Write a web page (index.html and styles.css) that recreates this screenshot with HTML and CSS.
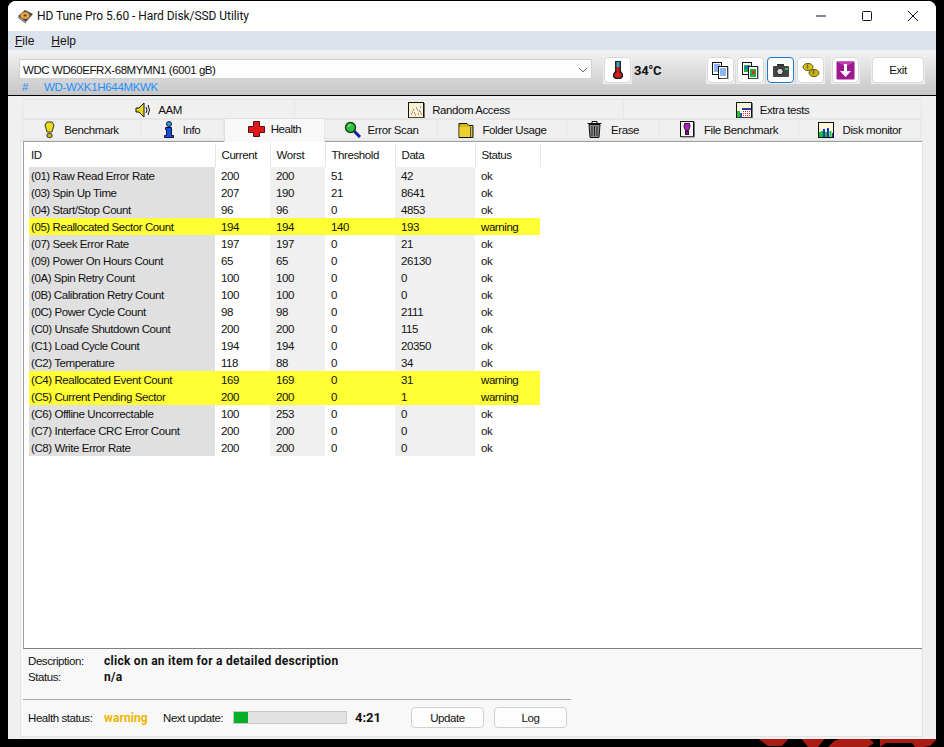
FILE: index.html
```html
<!DOCTYPE html>
<html lang="en">
<head>
<meta charset="utf-8">
<title>HD Tune Pro 5.60 - Hard Disk/SSD Utility</title>
<link rel="stylesheet" href="styles.css">
</head>
<body>
<svg class="wallpaper" width="184" height="10" viewBox="0 0 184 10"><path fill="#a81c14" d="M0 0h34l-8 9H12zM44 0h26l-8 10H52zM72 10l6-6 10-4h24l6 6-6 4zM124 0h30l6-3h20v6l-6 6-14 2-4-5h-26l-6 4z"/></svg>
<div class="window">
  <header class="titlebar">
    <svg class="app-icon" width="17" height="17" viewBox="0 0 17 17"><path fill="#4a4a4a" d="M1 8l7-6 8 4-7 8z"/><path fill="#8a8a8a" d="M1 8l8 6v2L1 10z"/><ellipse cx="8" cy="7.5" rx="4.6" ry="3.6" fill="#e8a040"/><ellipse cx="8" cy="7.5" rx="1.4" ry="1" fill="#5a4020"/></svg>
    <span class="title-text">HD Tune Pro 5.60 - Hard Disk/SSD Utility</span>
    <div class="win-controls">
      <svg class="win-btn" width="46" height="20" viewBox="0 0 46 20"><path d="M18 10h10" stroke="#111" fill="none"/></svg>
      <svg class="win-btn" width="46" height="20" viewBox="0 0 46 20"><rect x="18.5" y="5.5" width="9" height="9" rx="1" stroke="#111" fill="none"/></svg>
      <svg class="win-btn" width="46" height="20" viewBox="0 0 46 20"><path d="M18 5l10 10M28 5L18 15" stroke="#111" fill="none"/></svg>
    </div>
  </header>
  <nav class="menubar">
    <span class="menu-item"><u>F</u>ile</span>
    <span class="menu-item"><u>H</u>elp</span>
  </nav>
  <section class="toolbar">
    <div class="drive-col">
      <div class="combo">
        <span>WDC WD60EFRX-68MYMN1 (6001 gB)</span>
        <svg width="10" height="6" viewBox="0 0 10 6"><path d="M1 1l4 4 4-4" stroke="#666" fill="none"/></svg>
      </div>
      <div class="serial"><span class="serial-hash">#</span><span>WD-WXK1H644MKWK</span></div>
    </div>
    <button class="tool-btn thermo-btn">
      <svg width="12" height="20" viewBox="0 0 12 20"><path fill="#222" d="M3 1h6v10l2 3v3l-2 2H3l-2-2v-3l2-3z"/><rect x="4.5" y="2" width="3" height="5" fill="#3aa8c8"/><rect x="4.5" y="7" width="3" height="6" fill="#d01818"/><path fill="#e01818" d="M2.5 14l2-1h3l2 1v2l-1.5 1.500h-4L2.500 16z"/></svg>
    </button>
    <span class="temp">34°C</span>
    <div class="tool-group">
      <button class="tool-btn">
        <svg width="17" height="17" viewBox="0 0 17 17"><rect x=".5" y=".5" width="9" height="12" fill="#fff" stroke="#111"/><path d="M2 3h6M2 5h6M2 7h6M2 9h6" stroke="#1a6ee0"/><rect x="6.500" y="4.500" width="9" height="12" fill="#fff" stroke="#111"/><path d="M8 7h6M8 9h6M8 11h6M8 13h6" stroke="#1a6ee0"/><path d="M16 5v12H8" stroke="#777" fill="none"/></svg>
      </button>
      <button class="tool-btn">
        <svg width="17" height="17" viewBox="0 0 17 17"><rect x=".5" y=".5" width="9" height="12" fill="#fff" stroke="#111"/><rect x="2" y="3" width="6" height="7" fill="#20b040"/><rect x="3" y="4" width="3" height="3" fill="#1a6ee0"/><rect x="6.500" y="4.500" width="9" height="12" fill="#fff" stroke="#111"/><rect x="8" y="7" width="6" height="8" fill="#20b040"/><rect x="10" y="9" width="3" height="3" fill="#e03020"/><path d="M16 5v12H8" stroke="#777" fill="none"/></svg>
      </button>
      <button class="tool-btn tool-btn-active">
        <svg width="18" height="15" viewBox="0 0 18 15"><rect x="5" y="1" width="7" height="3" fill="#333"/><rect x="1" y="3" width="16" height="11" rx="1" fill="#444"/><circle cx="8" cy="8.500" r="3.200" fill="#ddd" stroke="#222"/><rect x="13" y="5" width="3" height="2" fill="#30c050"/></svg>
      </button>
      <button class="tool-btn">
        <svg width="18" height="16" viewBox="0 0 18 16"><ellipse cx="6" cy="5" rx="5" ry="3.600" fill="#d8c010" stroke="#6a5a10"/><ellipse cx="12" cy="11" rx="5" ry="3.600" fill="#c8b010" stroke="#6a5a10"/><path d="M5.500 2.500v4M11.500 8v4" stroke="#6a6a40" stroke-width="1.500"/></svg>
      </button>
      <button class="tool-btn tool-btn-far">
        <svg width="19" height="19" viewBox="0 0 19 19"><rect x=".5" y=".5" width="18" height="18" rx="1" fill="#a01890"/><path d="M.5.500h18L9.500 6z" fill="#c040b0"/><path d="M8 3h3v7h4l-5.500 6L4 10h4z" fill="#fff"/></svg>
      </button>
    </div>
    <button class="tool-btn exit-btn">Exit</button>
  </section>
  <section class="tabs">
    <div class="tab-row">
      <div class="tab t-aam">
        <svg width="17" height="16" viewBox="0 0 17 16"><path d="M1 6h3l5-5v14l-5-5H1z" fill="#e8d820" stroke="#111"/><path d="M11 5q2 3 0 6M13 3q3 5 0 10" stroke="#111" fill="none"/></svg>
        <span>AAM</span>
      </div>
      <div class="tab t-random">
        <svg class="gap-slim" width="17" height="16" viewBox="0 0 17 16"><rect x=".5" y=".5" width="15" height="15" fill="#fbf3cc" stroke="#111"/><path d="M16.500 1v15H1" stroke="#777" fill="none"/><path d="M3 12h1M6 11h1M9 8h1M12 5h1M5 8h1M8 6h1M11 9h1" stroke="#2030d0" stroke-width="1.200"/><path d="M4 10h1M7 13h1M10 12h1M13 12h1M12 10h1" stroke="#e02020" stroke-width="1.200"/></svg>
        <span>Random Access</span>
      </div>
      <div class="tab t-extra">
        <svg class="gap-slim" width="17" height="16" viewBox="0 0 17 16"><rect x=".5" y=".5" width="15" height="15" fill="#fdf8d8" stroke="#111"/><path d="M16.500 1v15H1" stroke="#777" fill="none"/><rect x="1" y="9" width="3" height="6" fill="#20c030"/><rect x="4" y="11" width="2" height="4" fill="#1a50d0"/><rect x="6" y="6" width="9" height="9" fill="#fff"/><rect x="6" y="6" width="9" height="2" fill="#2040b0"/><path d="M7 9.500h7M7 11.500h7M7 13.500h7" stroke="#e02020" stroke-dasharray="1 1"/></svg>
        <span>Extra tests</span>
      </div>
    </div>
    <div class="tab-row">
      <div class="tab t-bench">
        <svg class="gap-wide" width="11" height="17" viewBox="0 0 11 17"><path d="M3 1h5l2 3-2 7H3L1 4z" fill="#ecdc20" stroke="#333"/><rect x="3" y="12.500" width="5" height="4" rx="1.500" fill="#c8b810" stroke="#333"/></svg>
        <span>Benchmark</span>
      </div>
      <div class="tab t-info">
        <svg class="gap-wide" width="10" height="17" viewBox="0 0 10 17"><circle cx="5" cy="3" r="2.500" fill="#20a0f0" stroke="#113"/><path d="M1.500 6.500h6v8h2v2h-9v-2h2v-6h-1z" fill="#1050e0" stroke="#113"/></svg>
        <span>Info</span>
      </div>
      <div class="tab tab-selected t-health">
        <svg width="17" height="16" viewBox="0 0 17 16"><path d="M5.500.500h6v5h5v6h-5v4h-6v-4h-5v-6h5z" fill="#e01818" stroke="#501010"/></svg>
        <span>Health</span>
      </div>
      <div class="tab t-scan">
        <svg width="18" height="17" viewBox="0 0 18 17"><path d="M9 9l7 7" stroke="#1020a0" stroke-width="3"/><circle cx="6.500" cy="6.500" r="5" fill="#30c040" stroke="#184018" stroke-width="1.400"/><path d="M4 6q1-2 3-2.500" stroke="#c0f0c0" fill="none"/></svg>
        <span>Error Scan</span>
      </div>
      <div class="tab t-folder">
        <svg class="gap-wide" width="16" height="16" viewBox="0 0 16 16"><path d="M1 1.500h8l2 2h4v12H1z" fill="#d8b818" stroke="#111"/><path d="M1.500 5h12v10h-12z" fill="#ecd030"/><path d="M12.500 5v10" stroke="#3a5080"/></svg>
        <span>Folder Usage</span>
      </div>
      <div class="tab t-erase">
        <svg class="gap-wide" width="15" height="17" viewBox="0 0 15 17"><path d="M.5 2.500h14M5 2V.5h5V2" stroke="#111" fill="none"/><path d="M2 3.500h11l-1 13H3z" fill="#8a8a8a" stroke="#111"/><path d="M5 5v10M7.500 5v10M10 5v10" stroke="#222"/></svg>
        <span>Erase</span>
      </div>
      <div class="tab t-file">
        <svg class="gap-wide" width="15" height="17" viewBox="0 0 15 17"><rect x=".5" y=".5" width="13" height="15" fill="#f4f4f0" stroke="#111"/><path d="M14.500 1v15H1" stroke="#777" fill="none"/><path d="M4.500 2.500h5l.5 3-1.500 4h-3L4 5.500z" fill="#b020c0" stroke="#301030"/><rect x="5.500" y="10.500" width="3" height="3" fill="#901090" stroke="#301030"/></svg>
        <span>File Benchmark</span>
      </div>
      <div class="tab t-monitor">
        <svg class="gap-wide" width="16" height="16" viewBox="0 0 16 16"><rect x=".5" y=".5" width="15" height="15" fill="#fdf8d8" stroke="#111"/><path d="M2 15V10M4 15V9" stroke="#18c030" stroke-width="2"/><path d="M6 15V7" stroke="#1838d0" stroke-width="2"/><path d="M8 15V10" stroke="#18c030" stroke-width="2"/><path d="M10 15V6" stroke="#1838d0" stroke-width="2"/><path d="M12.500 15V9" stroke="#18c030" stroke-width="2"/><path d="M14.500 15V11" stroke="#1838d0" stroke-width="1"/></svg>
        <span>Disk monitor</span>
      </div>
    </div>
  </section>
  <main class="page">
    <div class="panel">
      <table class="smart">
        <thead>
          <tr><th class="c-id">ID</th><th class="c-cur">Current</th><th class="c-worst">Worst</th><th class="c-thr">Threshold</th><th class="c-data">Data</th><th class="c-status">Status</th></tr>
        </thead>
        <tbody>
          <tr><td>(01) Raw Read Error Rate</td><td>200</td><td>200</td><td>51</td><td>42</td><td>ok</td></tr>
          <tr><td>(03) Spin Up Time</td><td>207</td><td>190</td><td>21</td><td>8641</td><td>ok</td></tr>
          <tr><td>(04) Start/Stop Count</td><td>96</td><td>96</td><td>0</td><td>4853</td><td>ok</td></tr>
          <tr class="warn"><td>(05) Reallocated Sector Count</td><td>194</td><td>194</td><td>140</td><td>193</td><td>warning</td></tr>
          <tr><td>(07) Seek Error Rate</td><td>197</td><td>197</td><td>0</td><td>21</td><td>ok</td></tr>
          <tr><td>(09) Power On Hours Count</td><td>65</td><td>65</td><td>0</td><td>26130</td><td>ok</td></tr>
          <tr><td>(0A) Spin Retry Count</td><td>100</td><td>100</td><td>0</td><td>0</td><td>ok</td></tr>
          <tr><td>(0B) Calibration Retry Count</td><td>100</td><td>100</td><td>0</td><td>0</td><td>ok</td></tr>
          <tr><td>(0C) Power Cycle Count</td><td>98</td><td>98</td><td>0</td><td>2111</td><td>ok</td></tr>
          <tr><td>(C0) Unsafe Shutdown Count</td><td>200</td><td>200</td><td>0</td><td>115</td><td>ok</td></tr>
          <tr><td>(C1) Load Cycle Count</td><td>194</td><td>194</td><td>0</td><td>20350</td><td>ok</td></tr>
          <tr><td>(C2) Temperature</td><td>118</td><td>88</td><td>0</td><td>34</td><td>ok</td></tr>
          <tr class="warn"><td>(C4) Reallocated Event Count</td><td>169</td><td>169</td><td>0</td><td>31</td><td>warning</td></tr>
          <tr class="warn"><td>(C5) Current Pending Sector</td><td>200</td><td>200</td><td>0</td><td>1</td><td>warning</td></tr>
          <tr><td>(C6) Offline Uncorrectable</td><td>100</td><td>253</td><td>0</td><td>0</td><td>ok</td></tr>
          <tr><td>(C7) Interface CRC Error Count</td><td>200</td><td>200</td><td>0</td><td>0</td><td>ok</td></tr>
          <tr><td>(C8) Write Error Rate</td><td>200</td><td>200</td><td>0</td><td>0</td><td>ok</td></tr>
        </tbody>
      </table>
    </div>
    <div class="desc-block">
      <div class="desc-row"><span class="desc-label">Description:</span><b class="desc-value">click on an item for a detailed description</b></div>
      <div class="desc-row"><span class="desc-label">Status:</span><b class="desc-value">n/a</b></div>
    </div>
    <div class="status-bar">
      <span class="status-label">Health status:</span>
      <b class="status-value">warning</b>
      <span class="next-label">Next update:</span>
      <div class="progress"><div class="progress-fill" style="width:14px"></div></div>
      <b class="countdown">4:21</b>
      <button class="btn btn-update">Update</button>
      <button class="btn">Log</button>
    </div>
  </main>
</div>
</body>
</html>
```
FILE: styles.css
```css
* { box-sizing: border-box; }
html, body { margin: 0; height: 100%; }
body {
  background: #000;
  font: 11.5px/16px "Liberation Sans", Roboto, sans-serif;
  letter-spacing: -.42px;
  color: #111;
  overflow: hidden;
  position: relative;
}
.wallpaper { position: absolute; right: 4px; bottom: 0; }
button { font: inherit; letter-spacing: inherit; color: inherit; padding: 0; }
svg { display: block; flex: none; }

.window {
  position: relative;
  margin: 1px 0 0 8px;
  width: 928px;
  height: 738px;
  background: #f0f0f0;
  border-radius: 8px 8px 0 0;
  display: flex;
  flex-direction: column;
  overflow: hidden;
}

.titlebar {
  height: 30px;
  flex: none;
  background: #fff;
  display: flex;
  align-items: center;
  padding-left: 9px;
}
.app-icon { margin-right: 3px; }
.title-text { font: 12px/16px Roboto, sans-serif; letter-spacing: -.06px; }
.win-controls { margin-left: auto; display: flex; }
.win-btn { width: 46px; height: 20px; }

.menubar {
  height: 19px;
  flex: none;
  background: #dce3ec;
  display: flex;
  gap: 17px;
  padding-left: 7px;
  align-items: center;
}
.menu-item { font-size: 12px; letter-spacing: 0; }

.toolbar {
  height: 46px;
  flex: none;
  background: linear-gradient(#f2f2f2, #c6c6c6);
  border-bottom: 1px solid #000;
  display: flex;
  align-items: flex-start;
  padding: 7px 0 0 11px;
  isolation: isolate;
}
.drive-col { width: 573px; padding-top: 2px; }
.combo {
  height: 20px;
  background: #fdfdfd;
  border: 1px solid #d0d0d0;
  border-radius: 2px;
  display: flex;
  align-items: center;
  justify-content: space-between;
  padding: 1px 3px 0 3px;
}
.serial {
  display: flex;
  color: #1e90ff;
  padding-left: 3px;
  height: 14px;
  line-height: 16px;
  letter-spacing: -.33px;
}
.serial-hash { width: 22px; }
.tool-btn {
  position: relative;
  width: 27px;
  height: 26px;
  background: #fff;
  border: 1px solid #d8d8d8;
  border-radius: 4px;
  display: flex;
  align-items: center;
  justify-content: center;
}
.tool-btn::before {
  content: "";
  position: absolute;
  inset: -2px;
  background: #eeeeee;
  z-index: -1;
}
.tool-btn-active { border-color: #1a78d0; }
.tool-btn-far { margin-left: 5px; }
.thermo-btn { margin-left: 12px; }
.temp { font: 700 13px/16px Roboto, sans-serif; letter-spacing: -.3px; margin: 6px 0 0 3px; width: 73px; }
.tool-group { display: flex; gap: 3px; }
.exit-btn { width: 52px; margin-left: 13px; }

.tabs { flex: none; padding: 3px 0 0 14px; }
.tab-row { display: flex; height: 20px; }
.tab {
  flex: none;
  display: flex;
  align-items: center;
  justify-content: center;
  gap: 6px;
  background: #f0f0f0;
  border: 1px solid #e6e6e6;
  border-left: none;
  padding-top: 1px;
}
.tab:first-child { border-left: 1px solid #e6e6e6; }
.gap-wide { margin-right: 3px; }
.gap-slim { margin-right: 1px; }
.t-aam { width: 273px; }
.t-random { width: 329px; }
.t-extra { width: 298px; }
.t-bench { width: 119px; }
.t-info { width: 83px; }
.t-health { width: 101px; }
.t-scan { width: 113px; }
.t-folder { width: 129px; }
.t-erase { width: 93px; }
.t-file { width: 139px; }
.t-monitor { width: 122px; }
.tab-selected {
  position: relative;
  height: 24px;
  margin-top: -1px;
  padding: 0 0 3px;
  background: #f8f8f8;
  border-bottom: none;
  border-top: 1px solid #e0e0e0;
  border-left: 1px solid #e0e0e0;
}

.page {
  flex: 1;
  margin: 1px 13px 2px 12px;
  background: #f8f8f8;
  border: 1px solid #e2e2e2;
  padding: 0 0 0 2px;
  display: flex;
  flex-direction: column;
}
.panel {
  height: 508px;
  flex: none;
  background: #fff;
  border: 1px solid #a0a0a0;
  border-right: none;
  border-bottom-color: #808080;
  padding: 1px 0 0 5px;
}
.smart { border-collapse: collapse; table-layout: fixed; width: 511px; }
.smart th {
  height: 24px;
  padding: 0 0 1px 6px;
  font-weight: 400;
  text-align: left;
  border-right: 1px solid #e6e6e6;
}
.smart .c-id { width: 186px; padding-left: 2px; }
.c-cur, .c-worst { width: 55px; }
.c-thr { width: 70px; }
.c-data { width: 80px; }
.c-status { width: 65px; }
.smart td { height: 17px; padding: 0 0 0 6px; white-space: nowrap; line-height: 16px; }
.smart td:first-child { padding-left: 2px; background: #e0e0e0; }
.smart td:nth-child(3), .smart td:nth-child(5) { background: #f0f0f0; }
.smart tr.warn td { background: #ffff33; }

.desc-block { height: 51px; padding: 4px 0 0 5px; border-bottom: 1px solid #a8a8a8; width: 548px; flex: none; }
.desc-row { display: flex; height: 16px; }
.desc-label { width: 76px; }
.desc-value { font: 700 12px/16px Roboto, sans-serif; letter-spacing: .27px; }

.status-bar { display: flex; align-items: center; padding: 6px 0 0 5px; height: 29px; }
.status-label { width: 76px; }
.status-value { font: 700 12px/16px Roboto, sans-serif; letter-spacing: .1px; color: #f0b400; width: 59px; }
.next-label { width: 70px; }
.progress { width: 114px; height: 13px; background: #e2e2e2; border: 1px solid #c8c8c8; }
.progress-fill { height: 100%; background: #06b025; }
.countdown { font: 700 13px/16px Roboto, sans-serif; letter-spacing: 0; margin-left: 8px; width: 56px; }
.btn {
  width: 73px;
  height: 21px;
  background: #fdfdfd;
  border: 1px solid #d0d0d0;
  border-radius: 4px;
}
.btn-update { margin-right: 10px; }
```
